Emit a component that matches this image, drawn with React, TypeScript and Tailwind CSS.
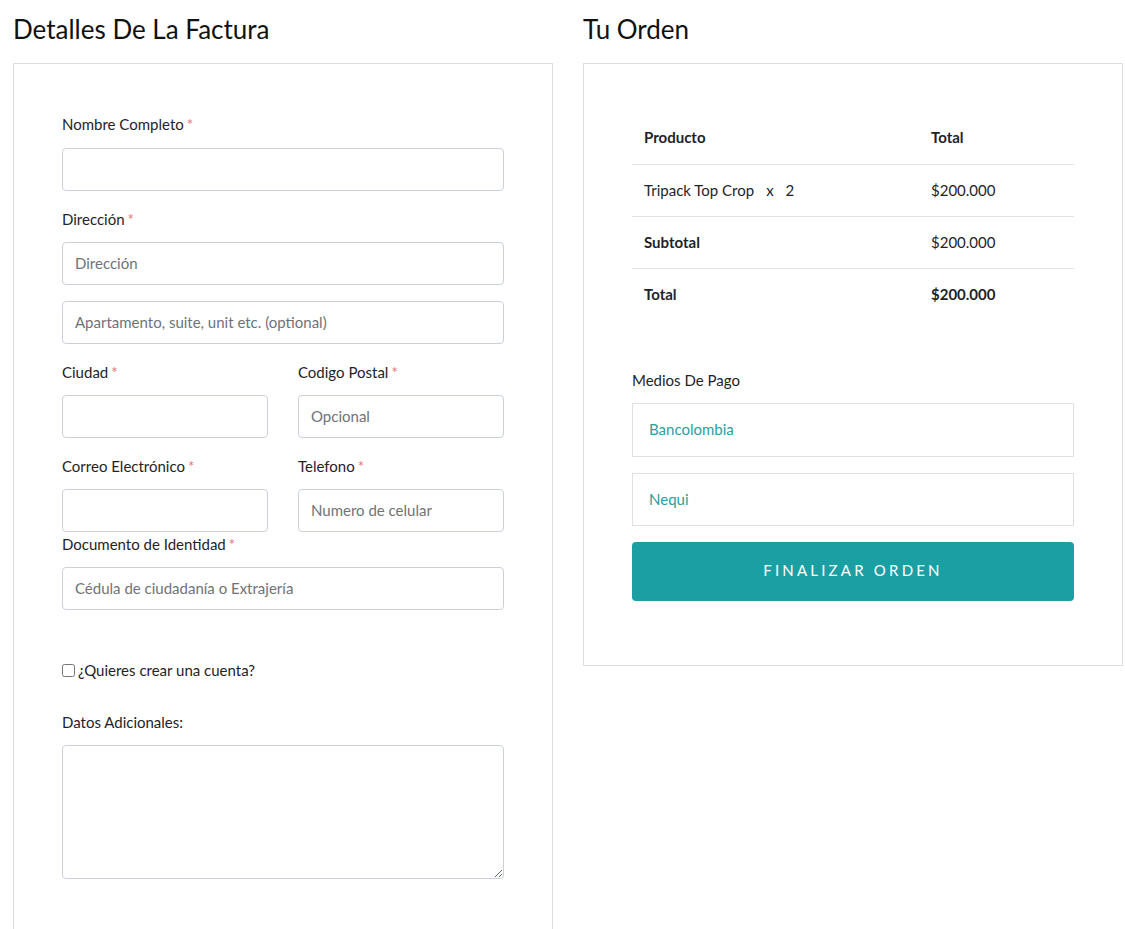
import React from "react";

const Req = () => <span className="text-[#e5727a] ml-[3px]">*</span>;

const inputCls =
  "block w-full h-[43px] border border-[#ccd1d9] rounded-[4px] px-[12px] pb-[2px] text-[15px] text-[#333] placeholder:text-[#6f7378] bg-white outline-none";

function Label({ children }: { children: React.ReactNode }) {
  return <div className="h-[24px] leading-[24px] text-[15px] text-[#1f2328]">{children}</div>;
}

export default function App() {
  return (
    <div className="min-h-screen bg-white" style={{ fontFamily: "Lato, 'Noto Sans', sans-serif" }}>
      <div className="flex gap-[30px] pl-[13px]">
        {/* Left column */}
        <div className="w-[540px] shrink-0">
          <h2 className="h-[63px] leading-[58px] text-[26px] text-[#111]">Detalles De La Factura</h2>
          <div className="border border-[#dedede] px-[48px] pt-[48px] pb-[80px]">
            <Label>
              Nombre Completo<Req />
            </Label>
            <input className={inputCls + " mt-[12px]"} />
            <div className="mt-[16px]">
              <Label>
                Dirección<Req />
              </Label>
            </div>
            <input className={inputCls + " mt-[11px]"} placeholder="Dirección" />
            <input className={inputCls + " mt-[16px]"} placeholder="Apartamento, suite, unit etc. (optional)" />
            <div className="grid grid-cols-2 gap-x-[30px] mt-[16px]">
              <div>
                <Label>
                  Ciudad<Req />
                </Label>
                <input className={inputCls + " mt-[11px]"} />
              </div>
              <div>
                <Label>
                  Codigo Postal<Req />
                </Label>
                <input className={inputCls + " mt-[11px]"} placeholder="Opcional" />
              </div>
            </div>
            <div className="grid grid-cols-2 gap-x-[30px] mt-[16px]">
              <div>
                <Label>
                  Correo Electrónico<Req />
                </Label>
                <input className={inputCls + " mt-[11px]"} />
              </div>
              <div>
                <Label>
                  Telefono<Req />
                </Label>
                <input className={inputCls + " mt-[11px]"} placeholder="Numero de celular" />
              </div>
            </div>
            <Label>
              Documento de Identidad<Req />
            </Label>
            <input className={inputCls + " mt-[11px]"} placeholder="Cédula de ciudadanía o Extrajería" />
            <label className="flex items-center mt-[48px] h-[24px] text-[15px] text-[#1f2328]">
              <input type="checkbox" className="w-[13px] h-[13px] m-0 mr-[3px]" />
              ¿Quieres crear una cuenta?
            </label>
            <div className="mt-[28px]">
              <Label>Datos Adicionales:</Label>
            </div>
            <textarea className="block w-full h-[134px] mt-[11px] border border-[#ccd1d9] rounded-[4px] p-[12px] text-[15px] outline-none" />
          </div>
        </div>

        {/* Right column */}
        <div className="w-[540px] shrink-0">
          <h2 className="h-[63px] leading-[58px] text-[26px] text-[#111]">Tu Orden</h2>
          <div className="border border-[#dedede] px-[48px] pt-[47px] pb-[64px]">
            <div className="text-[15px] text-[#1f2328]">
              <div className="grid grid-cols-[299px_1fr] h-[54px] items-center border-b border-[#e2e2e2] font-bold">
                <div className="pl-[12px]">Producto</div>
                <div>Total</div>
              </div>
              <div className="grid grid-cols-[299px_1fr] h-[52px] items-center border-b border-[#e2e2e2]">
                <div className="pl-[12px]">
                  Tripack Top Crop<span className="ml-[12px]">x</span>
                  <span className="ml-[12px]">2</span>
                </div>
                <div>$200.000</div>
              </div>
              <div className="grid grid-cols-[299px_1fr] h-[52px] items-center border-b border-[#e2e2e2]">
                <div className="pl-[12px] font-bold">Subtotal</div>
                <div>$200.000</div>
              </div>
              <div className="grid grid-cols-[299px_1fr] h-[50px] items-center">
                <div className="pl-[12px] font-bold">Total</div>
                <div className="font-bold">$200.000</div>
              </div>
            </div>
            <div className="mt-[49px] h-[24px] leading-[24px] text-[15px] text-[#1f2328]">Medios De Pago</div>
            <div className="mt-[11px] h-[54px] border border-[#e0e0e0] flex items-center pl-[16px] pb-[2px] text-[15px] text-[#2a9ea1]">
              Bancolombia
            </div>
            <div className="mt-[16px] h-[53px] border border-[#e0e0e0] flex items-center pl-[16px] text-[15px] text-[#2a9ea1]">
              Nequi
            </div>
            <button className="mt-[16px] w-full h-[59px] rounded-[4px] bg-[#1c9fa3] text-white text-[15px] tracking-[3.2px] uppercase pb-[2px]">
              Finalizar Orden
            </button>
          </div>
        </div>
      </div>
    </div>
  );
}
